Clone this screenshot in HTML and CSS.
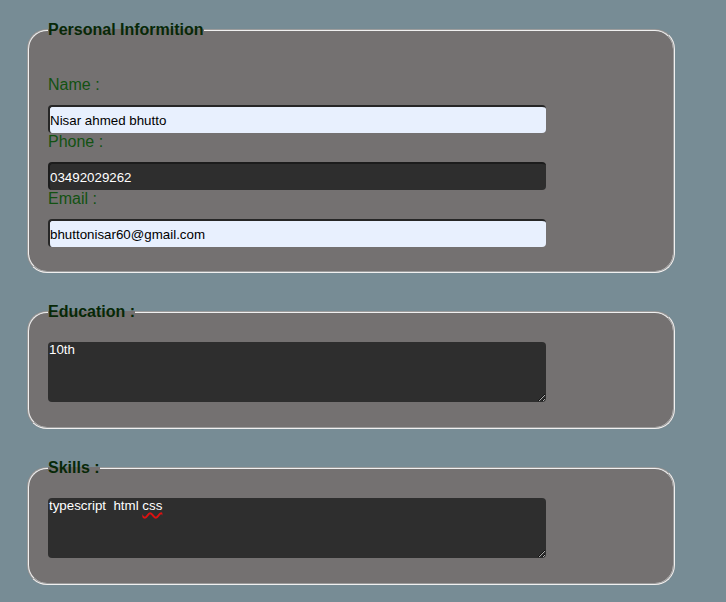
FILE: index.html
```html
<!DOCTYPE html>
<html lang="en">
<head>
<meta charset="utf-8">
<title>Resume form</title>
<link rel="stylesheet" href="styles.css">
</head>
<body>
<form class="resume">
  <fieldset class="group group--info">
    <legend class="group__title">Personal Informition</legend>
    <label class="field__label" for="name">Name :</label>
    <input class="field__input field__input--light" id="name" type="text" value="Nisar ahmed bhutto">
    <label class="field__label" for="phone">Phone :</label>
    <input class="field__input field__input--dark" id="phone" type="text" value="03492029262">
    <label class="field__label" for="email">Email :</label>
    <input class="field__input field__input--light" id="email" type="email" value="bhuttonisar60@gmail.com">
  </fieldset>

  <fieldset class="group">
    <legend class="group__title">Education :</legend>
    <textarea class="field__area" spellcheck="false">10th</textarea>
  </fieldset>

  <fieldset class="group">
    <legend class="group__title">Skills :</legend>
    <div class="field__area field__area--rich" role="textbox" aria-multiline="true" contenteditable="true">typescript  html <span class="misspelt">css</span></div>
  </fieldset>
</form>
</body>
</html>
```

FILE: styles.css
```css
html {
  background: #778c95;
}

body {
  margin: 0;
  font-family: "Liberation Sans", Arial, sans-serif;
}

.resume {
  display: flex;
  flex-direction: column;
  gap: 30px;
  padding: 21px 0 20px 27px;
}

.group {
  box-sizing: border-box;
  width: 648px;
  margin: 0;
  padding: 21px 19px 23px 19px;
  background: #747171;
  border: 2px groove rgb(240, 240, 240);
  border-radius: 20px;
  display: flex;
  flex-direction: column;
  align-items: flex-start;
}

.group--info {
  padding-top: 37px;
  padding-bottom: 24px;
}

.group__title {
  padding: 0;
  font-size: 16px;
  font-weight: bold;
  color: #072807;
}

.field__label {
  display: block;
  font-size: 16px;
  color: rgb(18, 82, 18);
}

.field__input {
  box-sizing: border-box;
  display: block;
  width: 498px;
  height: 28px;
  margin: 11px 0 0 0;
  padding: 0;
  font-family: "Liberation Sans", Arial, sans-serif;
  font-size: 13.333px;
  border-style: solid;
  border-width: 2px 0 0 2px;
  border-radius: 4px;
  outline: none;
}

.field__input--light {
  background: #e8f0fe;
  color: #000;
  border-color: #262626;
}

.field__input--dark {
  background: #2e2e2e;
  color: #fff;
  border-color: #1c1c1c;
}

.field__area {
  box-sizing: border-box;
  display: block;
  width: 498px;
  height: 60px;
  margin: 0 0 2px 0;
  padding: 0 1px;
  background: #2e2e2e;
  color: #fff;
  border: 0;
  border-radius: 4px;
  font-family: "Liberation Sans", Arial, sans-serif;
  font-size: 13.333px;
  line-height: normal;
  outline: none;
  resize: both;
  overflow: auto;
}

.field__area--rich {
  white-space: pre-wrap;
}

.misspelt {
  text-decoration: underline wavy #e01010;
  text-decoration-thickness: 1.5px;
  text-underline-offset: 2px;
}
```
